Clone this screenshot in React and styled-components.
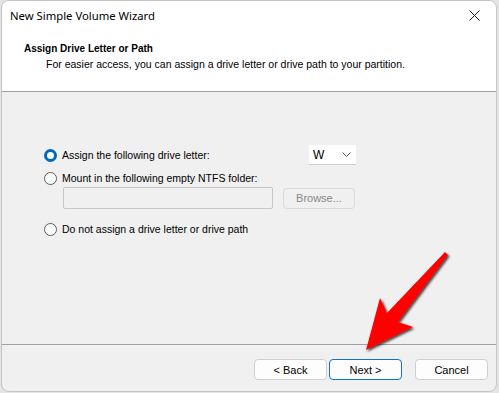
import styled, { createGlobalStyle } from 'styled-components'

const GlobalStyle = createGlobalStyle`
  html, body {
    margin: 0;
    padding: 0;
    background: #e4e4e4;
    width: 499px;
    height: 393px;
    overflow: hidden;
  }
  * {
    box-sizing: border-box;
  }
`

const Page = styled.div`
  position: relative;
  width: 499px;
  height: 393px;
  padding: 0 2px 1px 1px;
`

const Window = styled.div`
  display: flex;
  flex-direction: column;
  width: 496px;
  height: 392px;
  background: #f0f0f0;
  border: 1px solid #c4c4c4;
  border-radius: 8px;
  overflow: hidden;
  font-family: 'Liberation Sans', Arial, sans-serif;
  font-size: 10.5px;
  color: #000;
`

const TitleBar = styled.div`
  display: flex;
  align-items: center;
  justify-content: space-between;
  height: 31px;
  padding: 0 8px 2px 8px;
  background: #fff;
  font-family: 'Noto Sans', 'Liberation Sans', sans-serif;
  font-size: 11.3px;
`

const CloseButton = styled.div`
  display: flex;
  align-items: center;
  justify-content: center;
  width: 24px;
  height: 24px;
  margin-right: 2px;
`

const Header = styled.div`
  display: flex;
  flex-direction: column;
  height: 60px;
  padding: 9px 0 0 22px;
  background: #fff;
  border-bottom: 1px solid #a0a0a0;
`

const HeaderTitle = styled.div`
  font-weight: bold;
  font-size: 10px;
  line-height: 15px;
`

const HeaderText = styled.div`
  padding-left: 22px;
  line-height: 15px;
  margin-top: 1px;
`

const Body = styled.div`
  display: flex;
  flex-direction: column;
  flex: 1;
  padding: 52px 0 0 42px;
`

const Row = styled.div`
  display: flex;
  align-items: center;
  height: ${(props) => props.$height || 16}px;
  margin-top: ${(props) => props.$top || 0}px;
`

const Option = styled.label`
  display: flex;
  align-items: center;
  gap: 5px;
  width: ${(props) => (props.$width ? props.$width + 'px' : 'auto')};
`

const Radio = styled.span`
  display: inline-block;
  width: 13px;
  height: 13px;
  border-radius: 50%;
  background: #fff;
  border: ${(props) => (props.$checked ? '3px solid #0067c0' : '1px solid #5a5a5a')};
`

const Combo = styled.div`
  display: flex;
  align-items: center;
  justify-content: space-between;
  width: 47px;
  height: 20px;
  padding: 0 5px 0 4px;
  background: #fff;
  border-bottom: 1px solid #d0d0d0;
  font-size: 12px;
  color: #000;
`

const TextBox = styled.div`
  width: 210px;
  height: 22px;
  margin-left: 19px;
  background: #f0f0f0;
  border: 1px solid #c6c6c6;
  border-radius: 2px;
`

const Button = styled.div`
  display: flex;
  align-items: center;
  justify-content: center;
  width: ${(props) => props.$width || 73}px;
  height: 21px;
  background: ${(props) => (props.$disabled ? '#f0f0f0' : '#fdfdfd')};
  border: 1px solid ${(props) => (props.$primary ? '#1670c4' : props.$disabled ? '#dadada' : '#cfcfcf')};
  border-radius: 4px;
  color: ${(props) => (props.$disabled ? '#888' : '#000')};
  font-size: 11px;
`

const BrowseButton = styled(Button)`
  margin-left: 10px;
`

const Footer = styled.div`
  display: flex;
  align-items: flex-start;
  height: 47px;
  padding: 14px 0 0 252px;
  border-top: 1px solid #a0a0a0;
  gap: 2px;
`

const CancelButton = styled(Button)`
  margin-left: 11px;
`

const Arrow = styled.svg`
  position: absolute;
  left: 0;
  top: 0;
  pointer-events: none;
`

export default function App() {
  return (
    <>
      <GlobalStyle />
      <Page>
        <Window>
          <TitleBar>
            <span>New Simple Volume Wizard</span>
            <CloseButton>
              <svg width="11" height="11" viewBox="0 0 11 11">
                <path d="M0.5 0.5 L10.5 10.5 M10.5 0.5 L0.5 10.5" stroke="#1a1a1a" strokeWidth="1" />
              </svg>
            </CloseButton>
          </TitleBar>
          <Header>
            <HeaderTitle>Assign Drive Letter or Path</HeaderTitle>
            <HeaderText>
              For easier access, you can assign a drive letter or drive path to your partition.
            </HeaderText>
          </Header>
          <Body>
            <Row $height={22}>
              <Option $width={265}>
                <Radio $checked />
                Assign the following drive letter:
              </Option>
              <Combo>
                W
                <svg width="9" height="5" viewBox="0 0 9 5">
                  <path d="M0.5 0.5 L4.5 4.5 L8.5 0.5" fill="none" stroke="#555" strokeWidth="1" />
                </svg>
              </Combo>
            </Row>
            <Row $top={4}>
              <Option>
                <Radio />
                Mount in the following empty NTFS folder:
              </Option>
            </Row>
            <Row $height={22} $top={1}>
              <TextBox />
              <BrowseButton $disabled $width={72}>Browse...</BrowseButton>
            </Row>
            <Row $top={12}>
              <Option>
                <Radio />
                Do not assign a drive letter or drive path
              </Option>
            </Row>
          </Body>
          <Footer>
            <Button>&lt; Back</Button>
            <Button $primary>Next &gt;</Button>
            <CancelButton>Cancel</CancelButton>
          </Footer>
        </Window>
        <Arrow width="499" height="393" viewBox="0 0 499 393">
          <defs>
            <filter id="shadow" x="-20%" y="-20%" width="140%" height="140%">
              <feDropShadow dx="1.5" dy="1.5" stdDeviation="1.2" floodColor="#000" floodOpacity="0.75" />
            </filter>
          </defs>
          <polygon
            points="445,252 448,255 398,322 413,327 366,350 380,298 387,313"
            fill="#ff0000"
            filter="url(#shadow)"
          />
        </Arrow>
      </Page>
    </>
  )
}
